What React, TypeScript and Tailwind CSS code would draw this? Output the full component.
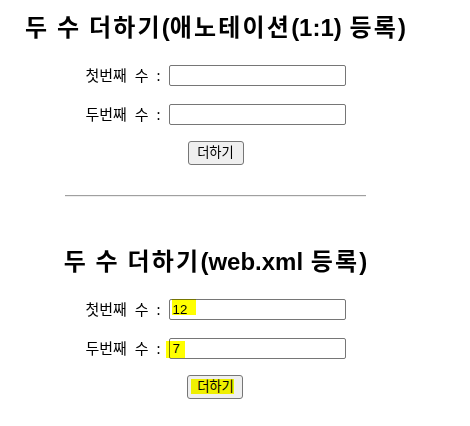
import React from "react";

const font = { fontFamily: '"Noto Sans", "Noto Sans CJK KR", sans-serif' };
const titleFont = { fontFamily: '"Liberation Sans", "Noto Sans CJK KR", sans-serif' };

function splitRuns(s: string) {
  const runs: { t: string; k: boolean }[] = [];
  for (const ch of s) {
    const k = /[\uac00-\ud7a3]/.test(ch);
    const last = runs[runs.length - 1];
    if (last && last.k === k) last.t += ch;
    else runs.push({ t: ch, k });
  }
  return runs;
}

function Title({ text }: { text: string }) {
  return (
    <h2 className="text-[24px] font-bold leading-[32px] text-black whitespace-nowrap [word-spacing:1px]" style={titleFont}>
      {splitRuns(text).map((r, i) =>
        r.k ? (
          <span key={i} className="tracking-[2.2px]">{r.t}</span>
        ) : (
          <span key={i}>{r.t}</span>
        )
      )}
    </h2>
  );
}

function Row({ label, value, hl }: { label: string; value?: string; hl?: React.ReactNode }) {
  return (
    <div className="flex items-center justify-center h-[21px]">
      <span className="text-[15px] leading-[21px] mr-[8px] text-black [word-spacing:4px]">{label}</span>
      <div className="relative w-[177px] h-[21px] border border-[#767676] rounded-[2px] bg-white flex items-center pl-[3px]">
        <span className="text-[13.3px] leading-none text-black" style={{ fontFamily: '"Liberation Sans", Arial, sans-serif' }}>{value}</span>
        {hl}
      </div>
    </div>
  );
}

function Btn({ hl }: { hl?: React.ReactNode }) {
  return (
    <div className="relative w-[56px] h-[24px] border border-[#767676] rounded-[3px] bg-[#efefef] flex items-center justify-center">
      <span className="text-[13.3px] leading-none text-black">더하기</span>
      {hl}
    </div>
  );
}

function Section({ title, v1, v2, highlight }: { title: string; v1?: string; v2?: string; highlight?: boolean }) {
  return (
    <div className="flex flex-col items-center">
      <Title text={title} />
      <div className="mt-[21px]">
        <Row
          label="첫번째 수 :"
          value={v1}
          hl={highlight ? <span className="absolute left-[2px] top-[-1px] w-[24px] h-[16px] bg-[#ffff00] mix-blend-multiply" /> : null}
        />
      </div>
      <div className="mt-[18px]">
        <Row
          label="두번째 수 :"
          value={v2}
          hl={highlight ? <span className="absolute left-[-4px] top-[2px] w-[19px] h-[17px] bg-[#ffff00] mix-blend-multiply" /> : null}
        />
      </div>
      <div className="mt-[16px]">
        <Btn hl={highlight ? <span className="absolute left-[3px] top-[3px] w-[43px] h-[15px] bg-[#ffff00] mix-blend-multiply" /> : null} />
      </div>
    </div>
  );
}

export default function App() {
  return (
    <div className="w-[470px] h-[426px] bg-white" style={font}>
      <div className="w-[431px] flex flex-col items-center pt-[12px]">
        <Section title="두 수 더하기(애노테이션(1:1) 등록)" />
        <div className="mt-[30px] w-[301px] h-[2px] border-t border-[#a0a0a0] border-b border-b-[#eeeeee]" />
        <div className="mt-[49px]">
          <Section title="두 수 더하기(web.xml 등록)" v1="12" v2="7" highlight />
        </div>
      </div>
    </div>
  );
}
